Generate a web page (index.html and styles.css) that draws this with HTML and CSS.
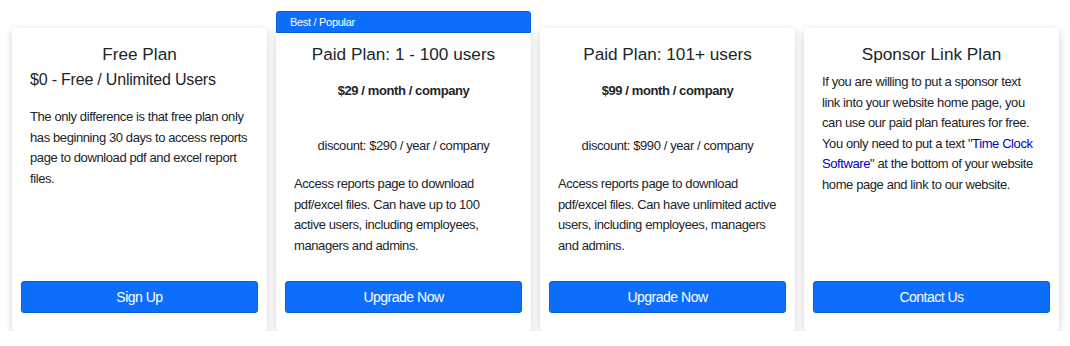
FILE: index.html
```html
<!DOCTYPE html>
<html>
<head>
    <meta charset="UTF-8">
    <title>Pricing Plans</title>
    <link rel="stylesheet" href="styles.css">
</head>
<body>
    <div class="plans">
        <div class="plan-card">
            <h2 class="plan-title">Free Plan</h2>
            <div class="plan-content">
                <div class="plan-price-big">$0 - Free / Unlimited Users</div>
                <p class="plan-text free-text">The only difference is that free plan only has beginning 30 days to access reports page to download pdf and excel report files.</p>
            </div>
            <button class="plan-button">Sign Up</button>
        </div>

        <div class="plan-card popular">
            <div class="popular-badge">Best / Popular</div>
            <h2 class="plan-title">Paid Plan: 1 - 100 users</h2>
            <div class="plan-content">
                <div class="plan-price">$29 / month / company</div>
                <div class="plan-discount">discount: $290 / year / company</div>
                <p class="plan-text paid-text">Access reports page to download pdf/excel files. Can have up to 100 active users, including employees, managers and admins.</p>
            </div>
            <button class="plan-button">Upgrade Now</button>
        </div>

        <div class="plan-card">
            <h2 class="plan-title">Paid Plan: 101+ users</h2>
            <div class="plan-content">
                <div class="plan-price">$99 / month / company</div>
                <div class="plan-discount">discount: $990 / year / company</div>
                <p class="plan-text paid-text">Access reports page to download pdf/excel files. Can have unlimited active users, including employees, managers and admins.</p>
            </div>
            <button class="plan-button">Upgrade Now</button>
        </div>

        <div class="plan-card">
            <h2 class="plan-title">Sponsor Link Plan</h2>
            <div class="plan-content">
                <p class="plan-text sponsor-text">If you are willing to put a sponsor text link into your website home page, you can use our paid plan features for free. You only need to put a text "<a href="#" class="plan-link">Time Clock Software</a>" at the bottom of your website home page and link to our website.</p>
            </div>
            <button class="plan-button">Contact Us</button>
        </div>
    </div>
</body>
</html>
```

FILE: styles.css
```css
:root {
    --primary-color: #0D6EFD;
    --text-color: #212529;
}

body {
    margin: 0;
    padding: 0;
    font-family: "Liberation Sans", Arial, sans-serif;
    background-color: white;
    color: var(--text-color);
}

.plans {
    display: flex;
    gap: 9px;
    padding: 28px 11px 0 12px;
}

.plan-card {
    position: relative;
    flex: 1;
    height: 303px;
    box-sizing: border-box;
    display: flex;
    flex-direction: column;
    padding: 15px 9px 18px;
    background-color: white;
    border-radius: 4px;
    box-shadow: 0 2px 8px rgba(0, 0, 0, 0.18);
}

.popular-badge {
    position: absolute;
    top: -17px;
    left: 0;
    right: 0;
    height: 22px;
    box-sizing: border-box;
    padding-left: 13px;
    line-height: 21px;
    font-size: 11px;
    letter-spacing: -0.3px;
    color: white;
    background-color: var(--primary-color);
    border: 1px solid #0B5ED7;
    border-radius: 3px 3px 0 0;
}

.plan-title {
    margin: 0;
    font-size: 17.2px;
    line-height: 22px;
    font-weight: normal;
    text-align: center;
}

.plan-content {
    flex: 1;
    padding: 0 9px;
}

.plan-price-big {
    margin-top: 5px;
    font-size: 16px;
    line-height: 20px;
    letter-spacing: -0.2px;
}

.plan-price {
    margin-top: 16px;
    font-size: 13px;
    line-height: 20px;
    letter-spacing: -0.4px;
    font-weight: bold;
    text-align: center;
}

.plan-discount {
    margin-top: 35px;
    font-size: 13px;
    line-height: 20px;
    letter-spacing: -0.4px;
    text-align: center;
}

.plan-text {
    margin: 0;
    font-size: 13px;
    line-height: 20.6px;
    letter-spacing: -0.4px;
}

.free-text {
    margin-top: 17px;
}

.paid-text {
    margin-top: 18px;
}

.sponsor-text {
    margin-top: 7px;
}

.plan-link {
    color: #0000CC;
    text-decoration: none;
}

.plan-button {
    height: 32px;
    padding: 0;
    border: 1px solid #0B5ED7;
    border-radius: 3px;
    font-family: inherit;
    font-size: 14px;
    letter-spacing: -0.5px;
    color: white;
    background-color: var(--primary-color);
    cursor: pointer;
}

.plan-button:hover {
    opacity: 0.9;
}
```
